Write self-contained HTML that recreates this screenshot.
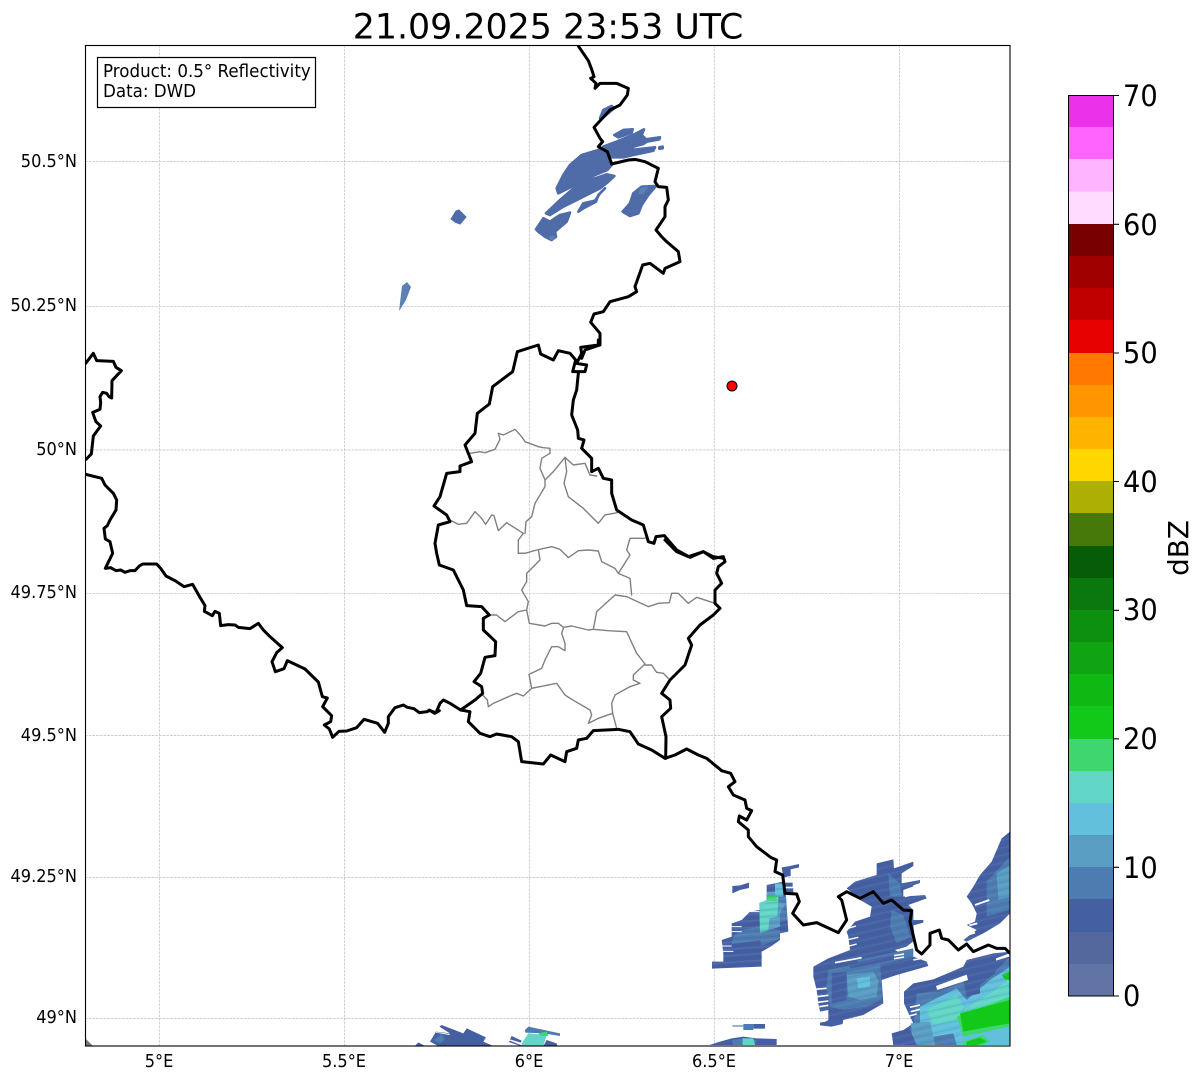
<!DOCTYPE html>
<html><head><meta charset="utf-8"><title>21.09.2025 23:53 UTC</title>
<style>
html,body{margin:0;padding:0;background:#fff}
svg{display:block}
text{font-family:"DejaVu Sans","Liberation Sans",sans-serif;fill:#000}
.gr{stroke:#bdbdbd;stroke-width:.7;stroke-dasharray:2.6 1.1;fill:none}
.b{fill:none;stroke:#000;stroke-width:3;stroke-linejoin:round;stroke-linecap:round;vector-effect:non-scaling-stroke}
.a{fill:none;stroke:#808080;stroke-width:1.4;stroke-linejoin:round;stroke-linecap:round;vector-effect:non-scaling-stroke}
.w{fill:none;stroke:#fff;vector-effect:non-scaling-stroke}
.c0{fill:#4560a2}.c1{fill:#4d7cb0}.c2{fill:#5a9dc3}.c3{fill:#62c0dc}.c4{fill:#62d6c6}.c5{fill:#3ed66e}.c6{fill:#12c818}.n{fill:#4f6ba8;stroke:#4f6ba8;stroke-width:8;stroke-linejoin:round}.n2{fill:#5a82b4}
</style></head>
<body>
<svg width="1202" height="1081" viewBox="0 0 1202 1081" xmlns="http://www.w3.org/2000/svg">
<defs>
<clipPath id="ax"><rect x="85.5" y="45.5" width="924.5" height="1000.5"/></clipPath>
<pattern id="st" width="40" height="22" patternUnits="userSpaceOnUse" patternTransform="rotate(-13)"><rect width="40" height="5" fill="#2f4a92" fill-opacity=".13"/><rect y="11" width="40" height="4" fill="#ffffff" fill-opacity=".06"/></pattern>
<pattern id="st2" width="40" height="20" patternUnits="userSpaceOnUse" patternTransform="rotate(-4)"><rect width="40" height="5" fill="#2f4a92" fill-opacity=".16"/><rect y="10" width="40" height="4" fill="#ffffff" fill-opacity=".08"/></pattern>
</defs>
<rect width="1202" height="1081" fill="#fff"/>
<text x="548" y="38.5" font-size="34.8" text-anchor="middle">21.09.2025 23:53 UTC</text>
<g clip-path="url(#ax)">
<g class="gr">
<path d="M159.3 45V1046M344.6 45V1046M529.3 45V1046M714.3 45V1046M899.6 45V1046"/>
<path d="M85 161.4H1010M85 306.3H1010M85 450H1010M85 593.3H1010M85 735.5H1010M85 877.4H1010M85 1018.4H1010"/>
</g>
<polygon points="85,1038 93,1046 85,1046" fill="#777"/>

<!-- north radar, zoom-4 coordinates -->
<g transform="translate(520,40) scale(.33333)">
<polygon class="n" points="110,445 130,405 150,375 185,345 235,330 262,335 275,375 262,390 225,405 195,420 155,440 115,460"/>
<polygon class="n" points="250,320 290,305 345,282 372,268 365,285 378,298 420,292 418,298 380,305 370,312 340,320 335,330 405,322 400,332 340,345 310,352 270,352 262,330"/>
<polygon class="n" points="283,285 310,270 338,268 335,278 295,292"/>
<polygon class="n" points="418,322 428,320 428,325 418,326"/>
<polygon class="n" points="78,520 120,480 155,450 190,425 225,415 260,403 283,408 265,425 240,445 210,460 170,480 130,500 90,525"/>
<polygon class="n" points="175,515 190,490 225,482 240,460 255,445 235,465 228,485 190,505"/>
<polygon class="n" points="48,568 70,535 90,545 120,525 150,518 140,545 105,575 108,590 95,600 75,590 55,575"/>
<polygon class="n" points="308,515 330,490 340,460 365,440 408,438 385,465 365,495 355,520 330,528"/>
<polygon class="n2" points="360,445 385,440 370,462 355,462"/>
<polygon class="n2" points="88,590 106,585 100,600 90,600"/>
<polygon class="n" points="240,235 250,210 275,198 282,205 255,228"/>
</g>
<polygon class="n" style="stroke-width:1" points="451,219 456,211 459,210 466,217 460,224 455,222"/>
<polygon class="n2" points="399,311 402,286 407,282 411,287 406,300 401,308"/>

<!-- south radar, zoom-5 coordinates -->
<g transform="translate(700,740) scale(.33333)">
<!-- blob A -->
<polygon class="c0" points="36,665 70,665 70,640 65,600 95,590 95,550 125,540 150,515 178,510 200,490 200,435 250,425 258,470 265,575 240,580 240,600 212,620 185,635 185,680 36,686"/>
<polygon class="c1" points="125,570 178,560 240,570 240,595 190,615 125,625 95,610 100,590"/>
<polygon class="c0" points="97,612 180,600 185,620 125,635 97,630"/>
<polygon class="c1" points="232,470 258,470 262,540 232,550"/>
<polygon class="c2" points="200,455 232,455 235,485 258,490 240,520 240,560 180,580 178,490 200,480"/>
<polygon class="c4" points="178,488 235,470 232,530 208,535 205,570 180,575"/>
<polygon class="c3" points="225,430 248,430 250,470 225,470"/>
<polygon class="c5" points="202,468 230,465 230,482 202,482"/>
<polygon class="c0" points="245,382 270,378 297,372 297,382 272,388 272,408 250,412"/>
<polygon class="c0" points="97,438 120,436 147,428 147,444 120,450 97,460"/>
<polygon class="c0" points="255,428 278,428 278,440 255,440"/>
<polygon class="c0" points="258,445 280,445 280,462 258,462"/>
<polygon fill="url(#st2)" points="36,665 70,665 70,640 65,600 95,590 95,550 125,540 150,515 178,510 200,490 200,435 250,425 258,470 265,575 240,580 240,600 212,620 185,635 185,680 36,686"/>
<path class="w" stroke-width="1" d="M65 618H95M65 634H100M95 560H125M95 575H125M150 515H178"/>
<!-- blob B -->
<polygon class="c0" points="465,425 530,405 530,370 580,358 582,385 640,365 640,378 605,400 605,430 660,420 660,432 610,450 610,470 675,465 680,475 625,495 640,510 640,540 670,540 670,548 640,556 645,600 620,620 585,630 610,645 640,650 680,665 685,678 590,705 545,720 550,790 490,825 430,840 395,860 360,855 385,840 385,810 360,815 355,790 350,750 340,710 340,680 385,655 450,630 445,590 440,575 465,545 510,530 515,500 480,480 440,445"/>
<polygon class="c1" points="575,510 610,525 632,590 590,610 570,560"/>
<polygon class="c1" points="565,400 600,430 605,470 570,470"/>
<polygon class="c1" points="385,690 440,680 540,665 545,730 545,780 500,800 430,810 390,800 380,740"/>
<polygon class="c0" points="395,700 440,695 440,780 395,790"/>
<polygon class="c2" points="440,705 520,695 535,720 530,770 480,780 445,770"/>
<polygon class="c3" points="470,715 510,710 510,740 475,745"/>
<polygon class="c1" points="470,660 640,625 640,650 480,690"/>
<polygon class="c0" points="450,672 600,640 600,655 450,685"/>
<polygon fill="url(#st)" points="465,425 530,405 530,370 580,358 582,385 640,365 640,378 605,400 605,430 660,420 660,432 610,450 610,470 675,465 680,475 625,495 640,510 640,540 670,540 670,548 640,556 645,600 620,620 585,630 610,645 640,650 680,665 685,678 590,705 545,720 550,790 490,825 430,840 395,860 360,855 385,840 385,810 360,815 355,790 350,750 340,710 340,680 385,655 450,630 445,590 440,575 465,545 510,530 515,500 480,480 440,445"/>
<path class="w" stroke-width="1.6" d="M405 668L485 653M345 748L380 745M350 770L385 766M352 787L385 783M358 800L385 796M582 647L612 642M582 656L612 651M640 660L690 650"/>
<path class="w" stroke-width="1.4" d="M630 495L690 480M640 438L670 428M615 470L665 455M440 600L475 592M440 620L470 612M440 566L468 558"/>
<!-- blob C -->
<polygon class="c0" points="575,880 610,870 640,850 630,830 612,790 612,755 640,730 700,718 790,680 800,660 880,640 930,635 930,915 580,915"/>
<polygon class="c1" points="650,760 720,755 800,720 830,690 880,700 930,650 930,915 590,915 610,885 640,860"/>
<polygon class="c3" points="660,800 770,745 800,780 870,720 930,680 930,915 700,915 660,860"/>
<polygon class="c4" points="680,810 770,765 790,800 780,840 700,855"/>
<polygon class="c4" points="790,810 880,755 930,715 930,780 800,830"/>
<polygon class="c5" points="770,830 930,770 930,860 790,890"/>
<polygon class="c6" points="780,820 930,780 930,850 870,860 790,875"/>
<polygon class="c6" points="905,705 930,695 930,720 915,718"/>
<polygon class="c5" points="790,905 850,885 870,905 850,915 790,915"/>
<polygon class="c6" points="800,905 840,893 860,905 830,915 800,915"/>
<polygon class="c2" points="632,850 690,845 705,915 640,915"/>
<polygon class="c0" points="580,885 630,870 650,915 580,915"/>
<polygon class="c1" points="700,890 760,880 770,915 705,915"/>
<polygon class="c0" points="790,720 830,685 880,670 885,700 840,735 840,760 800,770"/>
<polygon fill="url(#st)" points="575,880 610,870 640,850 630,830 612,790 612,755 640,730 700,718 790,680 800,660 880,640 930,635 930,770 770,830 790,915 580,915"/>
<polygon fill="#fff" points="708,738 800,704 804,720 712,750"/>
<polygon fill="#fff" points="888,655 928,640 928,650 888,662"/>
<path class="w" stroke-width="1.6" d="M630 802L660 795M632 815L660 808M620 830L650 822"/>
<!-- blob D -->
<polygon class="c0" points="800,470 820,440 840,405 875,365 905,295 930,275 930,520 900,550 850,580 800,605 790,600 830,570 800,555 825,545 830,520 815,490"/>
<polygon class="c1" points="860,425 930,350 930,510 860,530"/>
<polygon class="c2" points="890,400 930,375 930,470 895,480"/>
<polygon fill="url(#st)" points="800,470 820,440 840,405 875,365 905,295 930,275 930,520 900,550 850,580 800,605 790,600 830,570 800,555 825,545 830,520 815,490"/>
<path class="w" stroke-width="1.8" d="M825 495L868 480M800 530L828 525M808 556L832 550M800 585L825 578"/>
<!-- small -->
<polygon class="c0" points="360,848 395,842 430,838 428,852 395,860 360,856"/>
<polygon class="c0" points="160,852 195,852 195,866 160,866"/>
<polygon class="c1" points="130,852 160,852 160,870 130,870"/>
<path d="M97 858H130" stroke="#4560a2" stroke-width="1" vector-effect="non-scaling-stroke"/>
<polygon class="c0" points="28,915 60,905 95,895 130,890 170,895 230,897 230,915"/>
<polygon class="c1" points="95,900 130,895 170,900 165,915 100,915"/>
<polygon class="c4" points="128,895 160,895 165,915 128,915"/>
</g>

<!-- bottom radar, zoom-9 coordinates -->
<g transform="translate(400,1010) scale(.33333)">
<polygon class="c0" points="45,108 55,97 75,108"/>
<polygon class="c0" points="90,95 108,65 150,70 118,50 125,45 190,70 200,55 258,82 250,95 280,108 115,108"/>
<polygon class="c1" points="100,90 125,72 135,88 120,100"/>
<polygon fill="#fff" points="108,66 150,72 148,75 108,68"/>
<polygon class="c0" points="330,88 335,78 365,92 362,98"/>
<polygon class="c0" points="326,96 330,92 365,106 362,108"/>
<polygon class="c4" points="365,100 385,70 440,75 430,108 365,108"/>
<polygon class="c1" points="375,60 385,50 480,70 480,78 430,70 376,68"/>
<polygon class="c0" points="440,90 470,100 472,108 430,108"/>
<polygon class="c5" points="415,70 440,65 445,78 420,78"/>
</g>

<!-- Belgium/France borders -->
<g transform="translate(80,340) scale(.33333)">
<polyline class="b" points="17,70 40,40 50,62 100,64 108,82 124,92 96,122 95,174 87,170 80,160 68,157 60,170 62,188 60,208 38,217 44,235 48,245 62,258 40,288 34,342 18,358"/>
<polyline class="b" points="17,403 65,415 75,435 100,460 110,480 108,510 90,540 82,557 72,565 76,597 90,605 98,640 76,685 92,683 108,692 122,690 135,697 150,692 165,692 178,678 188,672 230,672 242,685 258,708 285,722 312,740 338,733 360,772 375,797 373,814 397,827 405,814 418,820 422,857 445,854 465,855 475,862 510,866 535,850 550,870 570,890 607,923 590,938 576,965 586,995 612,986 622,962 675,987 715,1026 727,1070 742,1074 728,1100 755,1127 752,1145 733,1155 748,1167 758,1192 777,1174 800,1173 830,1163 852,1138 893,1150 914,1177 925,1150 925,1130 945,1103 970,1095 982,1102 1002,1106 1018,1118 1042,1115 1048,1110 1064,1120 1078,1112"/>
</g>

<!-- Luxembourg admin -->
<g transform="translate(430,340) scale(.33333)">
<polyline class="a" points="120,340 150,335 165,338 195,328 210,298 205,280 220,285 255,268 275,290 285,305 325,320 340,323 360,325 360,340 335,355 330,385 345,420 345,440 315,490 305,530 288,545 285,580"/>
<polyline class="a" points="345,420 370,395 405,352 410,395 402,430 415,470 460,505 505,550 525,525 562,518"/>
<polyline class="a" points="405,352 430,375 465,370 480,405 500,408"/>
<polyline class="a" points="60,540 85,553 110,550 135,515 155,535 167,553 185,525 192,527 205,572 230,548 280,580 265,600 265,640 285,640"/>
</g>
<g transform="translate(430,540) scale(.33333)">
<polyline class="a" points="265,40 285,40 320,30 365,20 390,28 415,53 445,32 475,30 505,33 515,65 555,85 565,100 600,115 605,165"/>
<polyline class="a" points="645,-5 600,-5 590,30 600,45 565,100"/>
<polyline class="a" points="325,30 330,60 290,100 290,125 275,150 295,185 290,210 265,215 225,245 200,225 178,225"/>
<polyline class="a" points="290,210 298,250 345,258 365,250 385,250 400,262 425,258 475,270 490,268 500,215 555,165 590,170 655,200 685,190 718,188 725,160 745,160 775,190 800,172 855,190"/>
<polyline class="a" points="400,265 395,280 405,310 405,332 385,320 365,320 345,360 335,385 297,403 305,445"/>
<polyline class="a" points="490,268 535,272 590,275 620,340 645,372 610,405 610,420 630,430 600,440 555,465 545,490 548,520 560,565"/>
<polyline class="a" points="645,375 665,375 680,397 700,400 715,415"/>
<polyline class="a" points="305,445 380,430 405,465 420,475 480,510 485,525 475,550 505,535 548,520"/>
<polyline class="a" points="158,465 172,480 175,500 190,490 240,468 260,460 280,468 305,445"/>
</g>

<!-- Luxembourg borders -->
<g transform="translate(430,540) scale(.33333)">
<polyline class="b" points="0,512 18,518 30,490 40,480 60,490 92,510 120,515 115,545 150,580 180,590 200,582 245,590 265,605 275,665 340,672 362,645 405,665 410,635 440,625 445,600 470,595 490,572 565,568 600,575 625,612 665,630 705,655 735,645 770,627 805,645 830,655 875,692"/>
<polyline class="b" points="92,510 135,480 158,460 155,440 132,425 152,400 165,352 195,347 197,305 160,270 160,235 178,225 155,200 110,197 100,150 70,90 28,75 20,40 15,10"/>
<polyline class="b" points="705,0 740,35 775,50 820,35 850,55 880,50 885,65 865,80 860,100 875,130 855,150 855,190 870,205 850,225 810,255 775,295 785,315 765,375 720,420 695,460 720,480 722,505 695,530 708,590 707,655"/>
</g>
<g transform="translate(430,340) scale(.33333)">
<polyline class="b" points="15,610 25,555 60,545 50,525 12,498 30,470 50,400 90,395 90,378 125,365 105,315 135,280 142,220 178,192 188,140 248,95 262,35 325,15 332,42 370,60 385,32 420,40 437,60 428,95 465,95 470,75 440,70 455,40 452,22 505,15 505,0"/>
<polyline class="b" points="445,100 440,150 430,180 425,225 443,270 445,295 462,300 455,325 485,355 485,395 505,385 520,415 545,420 545,460 560,510 605,540 640,555 655,605 672,610 678,590 703,587 740,630 780,652 820,635 850,650 880,655"/>
</g>
<!-- north border -->
<g transform="translate(520,40) scale(.33333)">
<polyline class="b" points="175,18 205,62 215,88 222,110 212,115 228,130 225,145 240,130 290,130 325,145 322,165 300,195 270,210 222,262 240,295 248,305 235,320 262,335 275,372 325,360 345,358 375,365 415,385 405,425 415,440 440,442 445,480 435,500 435,530 408,570 425,590 440,605 475,635 480,665 435,685 430,700 390,670 368,675 345,740 350,755 325,770 270,785 250,815 222,822 212,847 240,880 240,915 195,930 185,955"/>
</g>
<!-- south-east border -->
<g transform="translate(700,740) scale(.33333)">
<polyline class="b" points="65,92 92,100 105,125 85,140 100,165 135,180 140,205 155,212 140,240 118,228 115,245 145,270 145,290 170,320 212,352 230,360 225,395 248,405 255,460 290,462 298,485 278,520 310,555 350,548 415,578 440,540 425,480 415,470 440,455 480,475 520,455 550,490 575,480 610,510 635,512 630,545 650,630 665,642 690,615 690,580 718,570 725,595 745,600 775,630 800,612 820,635 865,615 890,625 915,625 930,640"/>
</g>
<circle cx="732" cy="386" r="5" fill="#f00" stroke="#000" stroke-width="1"/>
</g>
<rect x="85.5" y="45.5" width="924.5" height="1000.5" fill="none" stroke="#000" stroke-width="1.1"/>

<!-- annotation -->
<rect x="97.5" y="57.5" width="218" height="50" fill="#fff" stroke="#000" stroke-width="1.2"/>
<text transform="translate(103,77) scale(.96,1)" font-size="17.4">Product: 0.5° Reflectivity</text>
<text transform="translate(103,97) scale(.96,1)" font-size="17.4">Data: DWD</text>

<!-- axis labels -->
<g font-size="17.4" text-anchor="end">
<text transform="translate(77,167) scale(.93,1)">50.5°N</text>
<text transform="translate(77,311) scale(.93,1)">50.25°N</text>
<text transform="translate(77,455) scale(.93,1)">50°N</text>
<text transform="translate(77,598) scale(.93,1)">49.75°N</text>
<text transform="translate(77,741) scale(.93,1)">49.5°N</text>
<text transform="translate(77,882) scale(.93,1)">49.25°N</text>
<text transform="translate(77,1023) scale(.93,1)">49°N</text>
</g>
<g font-size="17.4" text-anchor="middle">
<text transform="translate(159,1067) scale(.93,1)">5°E</text>
<text transform="translate(344,1067) scale(.93,1)">5.5°E</text>
<text transform="translate(529,1067) scale(.93,1)">6°E</text>
<text transform="translate(714,1067) scale(.93,1)">6.5°E</text>
<text transform="translate(899,1067) scale(.93,1)">7°E</text>
</g>

<!-- colorbar -->
<g shape-rendering="crispEdges">
<rect x="1068" y="95.5" width="45.5" height="32.5" fill="#eb32eb"/>
<rect x="1068" y="127" width="45.5" height="33" fill="#ff64ff"/>
<rect x="1068" y="159" width="45.5" height="33" fill="#ffb4ff"/>
<rect x="1068" y="191.5" width="45.5" height="33" fill="#ffdcff"/>
<rect x="1068" y="224" width="45.5" height="32.5" fill="#780000"/>
<rect x="1068" y="256" width="45.5" height="32.5" fill="#a00000"/>
<rect x="1068" y="288" width="45.5" height="32.5" fill="#c00000"/>
<rect x="1068" y="320" width="45.5" height="33" fill="#e60000"/>
<rect x="1068" y="353" width="45.5" height="32.5" fill="#ff7800"/>
<rect x="1068" y="385" width="45.5" height="32.5" fill="#ff9600"/>
<rect x="1068" y="417" width="45.5" height="32.5" fill="#ffb400"/>
<rect x="1068" y="449" width="45.5" height="32.5" fill="#ffd700"/>
<rect x="1068" y="481" width="45.5" height="32.5" fill="#adaf04"/>
<rect x="1068" y="513" width="45.5" height="33" fill="#47780a"/>
<rect x="1068" y="546" width="45.5" height="32.5" fill="#075c08"/>
<rect x="1068" y="578" width="45.5" height="32.5" fill="#0b780f"/>
<rect x="1068" y="610" width="45.5" height="32.5" fill="#0d8f10"/>
<rect x="1068" y="642" width="45.5" height="32.5" fill="#0fa512"/>
<rect x="1068" y="674" width="45.5" height="32.5" fill="#10b814"/>
<rect x="1068" y="706" width="45.5" height="33" fill="#12c818"/>
<rect x="1068" y="739" width="45.5" height="32.5" fill="#3ed66e"/>
<rect x="1068" y="771" width="45.5" height="32.5" fill="#62d6c6"/>
<rect x="1068" y="803" width="45.5" height="32.5" fill="#62c0dc"/>
<rect x="1068" y="835" width="45.5" height="32.5" fill="#5a9dc3"/>
<rect x="1068" y="867" width="45.5" height="32.5" fill="#4d7cb0"/>
<rect x="1068" y="899" width="45.5" height="33" fill="#4460a0"/>
<rect x="1068" y="932" width="45.5" height="32.5" fill="#54689e"/>
<rect x="1068" y="964" width="45.5" height="32" fill="#6274a6"/>
</g>
<rect x="1068.5" y="95.5" width="45" height="900.5" fill="none" stroke="#000" stroke-width="1"/>
<path d="M1113.5 95.5H1119M1113.5 224.3H1119M1113.5 353H1119M1113.5 481.5H1119M1113.5 610.3H1119M1113.5 738.8H1119M1113.5 867.3H1119M1113.5 996H1119" stroke="#000" stroke-width="1.1" fill="none"/>
<g font-size="29">
<text transform="translate(1123,106) scale(.94,1)">70</text>
<text transform="translate(1123,235) scale(.94,1)">60</text>
<text transform="translate(1123,363) scale(.94,1)">50</text>
<text transform="translate(1123,492) scale(.94,1)">40</text>
<text transform="translate(1123,620) scale(.94,1)">30</text>
<text transform="translate(1123,749) scale(.94,1)">20</text>
<text transform="translate(1123,878) scale(.94,1)">10</text>
<text transform="translate(1123,1006) scale(.94,1)">0</text>
</g>
<text transform="translate(1188,548) rotate(-90)" font-size="27.8" text-anchor="middle">dBZ</text>
</svg>
</body></html>
